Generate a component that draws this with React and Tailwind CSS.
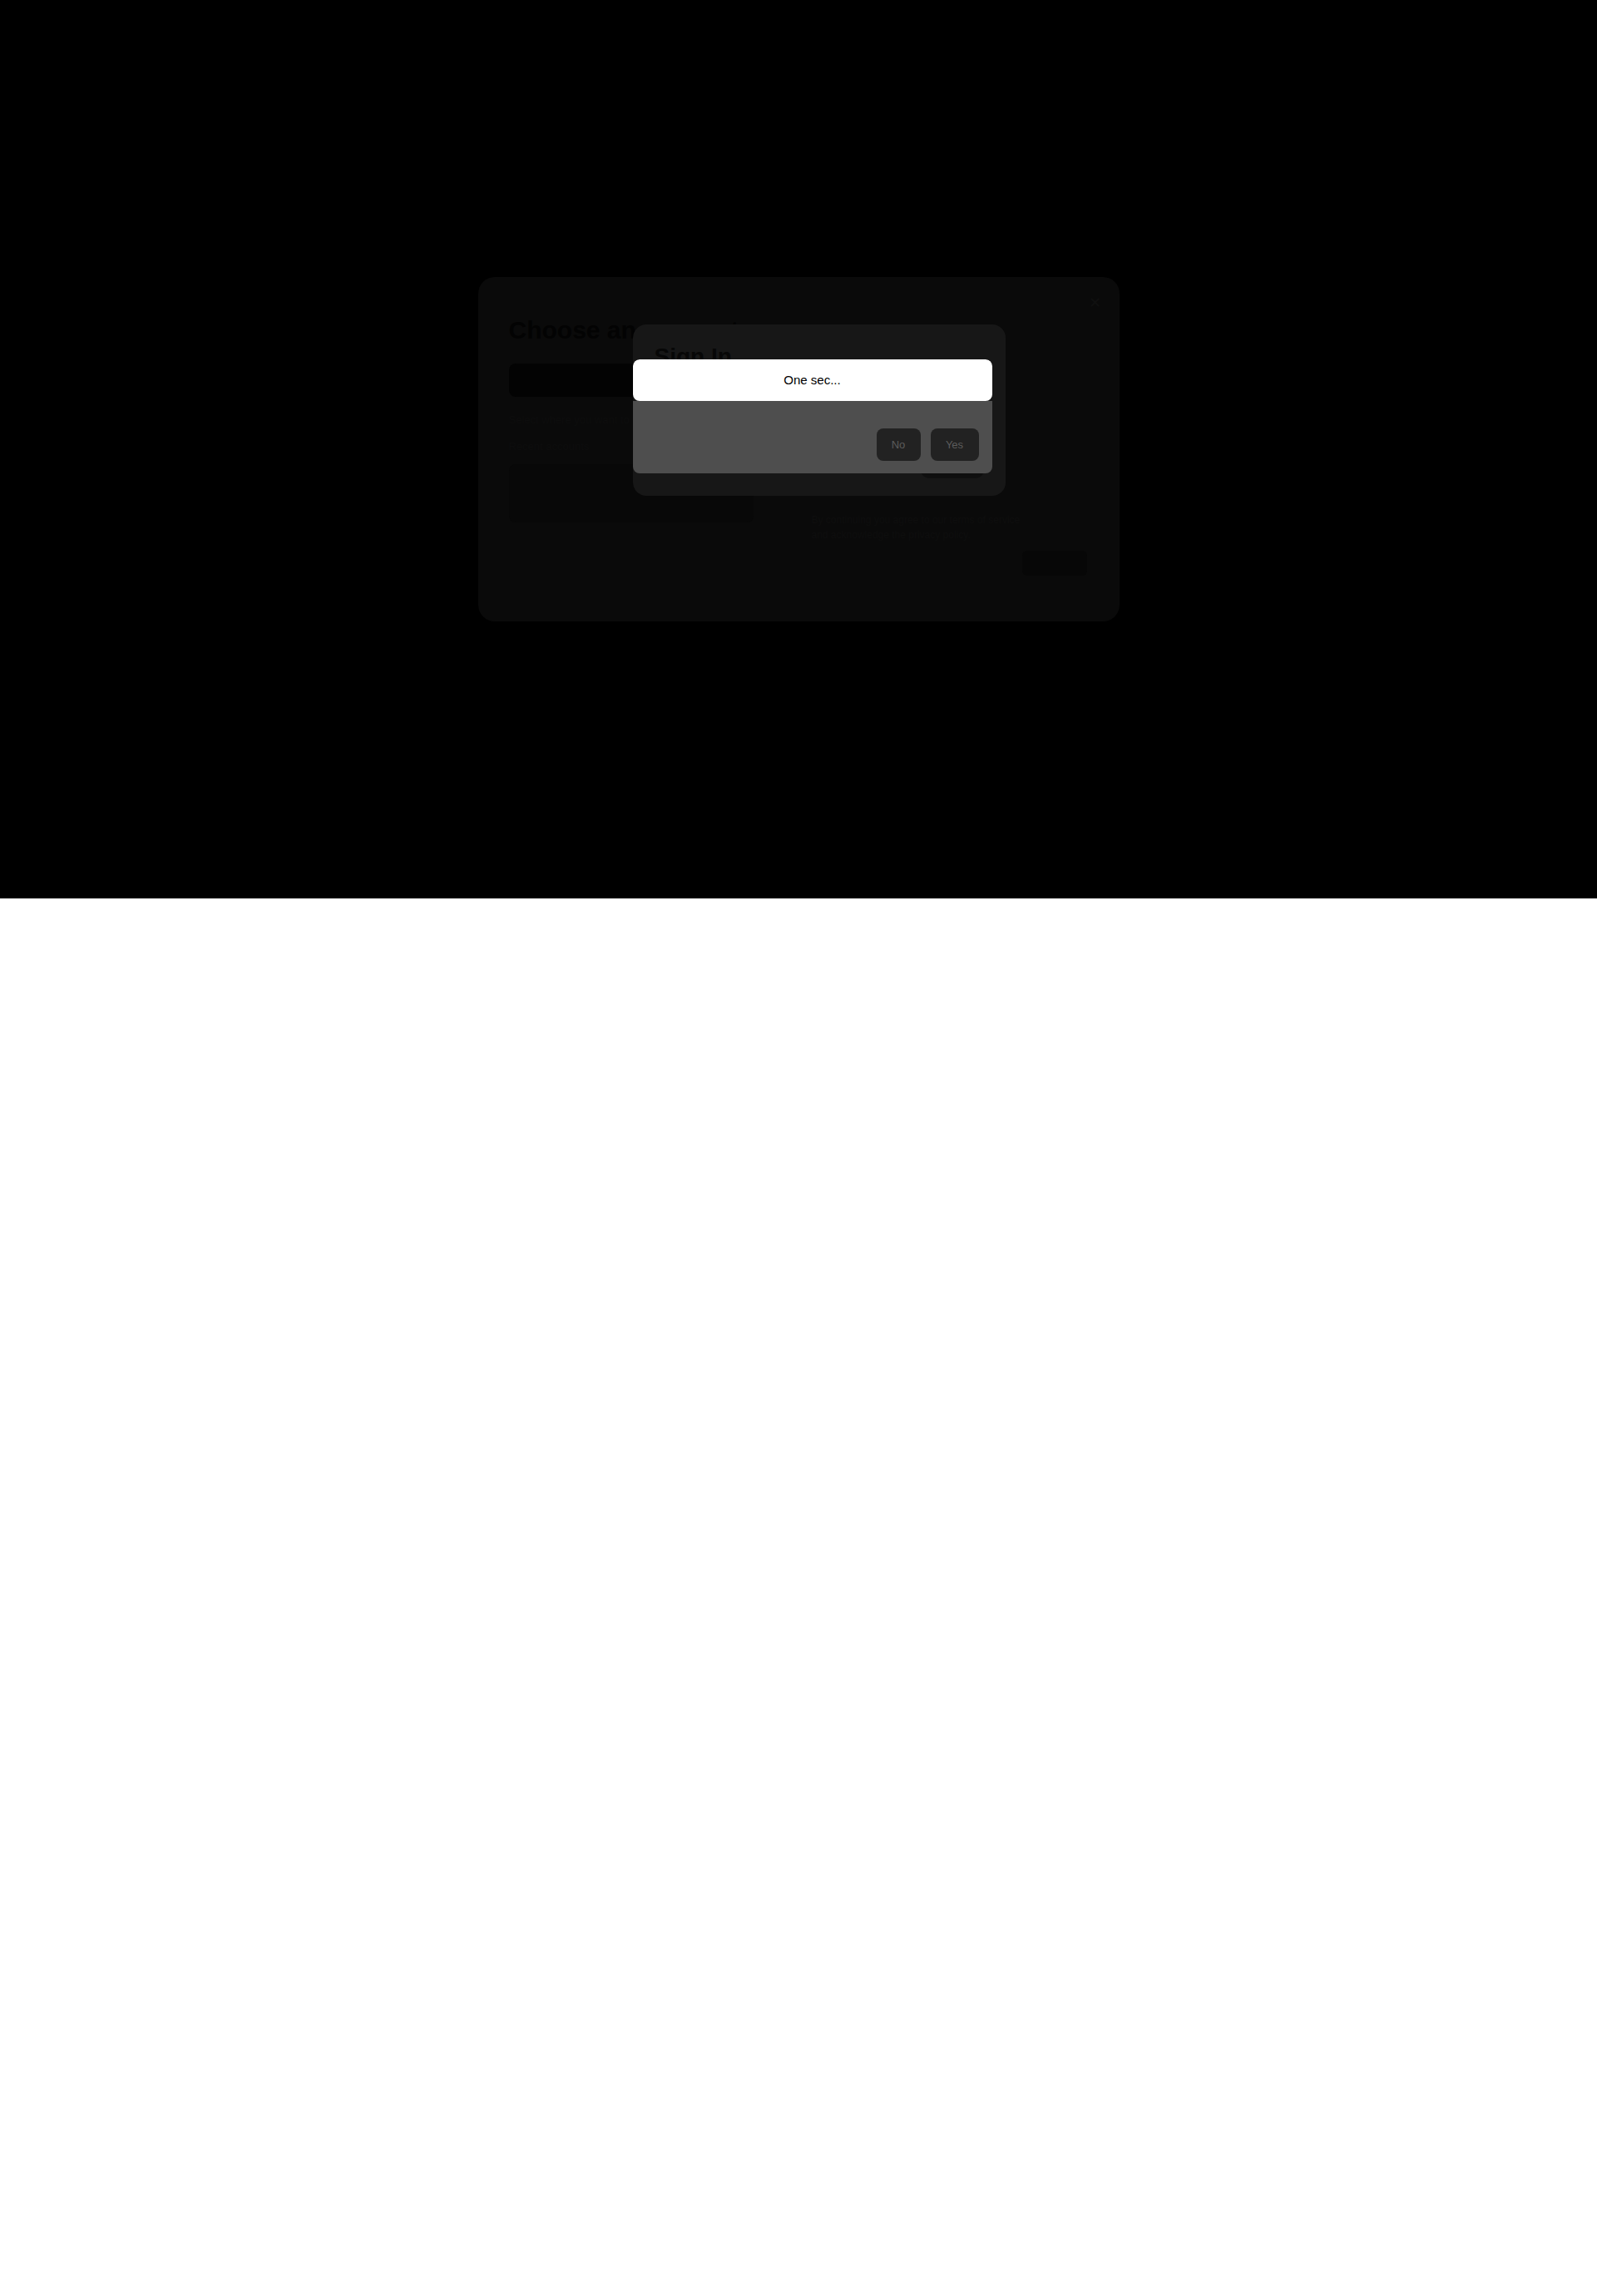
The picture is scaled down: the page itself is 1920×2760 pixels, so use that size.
export default function App() {
  return (
    <div className="w-full" style={{ fontFamily: '"Liberation Sans", Arial, sans-serif' }}>
      <div className="h-[1080px] w-full bg-black flex items-center justify-center">
        <div className="relative w-[771px] h-[414px] rounded-[20px] bg-[#0a0a0a] px-[37px] pt-[46px]">
          <div className="absolute right-[22px] top-[22px] text-[#101010] text-[18px] leading-none">✕</div>
          <h2 className="text-[30px] font-bold leading-[36px] text-[#030303]">Choose an account</h2>
          <div className="mt-[22px] h-[40px] w-[300px] rounded-[8px] bg-[#030303]"></div>
          <div className="mt-[18px] text-[13px] text-[#0d0d0d]">Select where you want to continue</div>
          <div className="mt-[12px] text-[13px] text-[#0d0d0d]">Recent accounts</div>
          <div className="mt-[12px] flex gap-[70px]">
            <div className="h-[70px] w-[294px] rounded-[8px] bg-[#080808]"></div>
            <div className="flex flex-col pt-[58px] text-[12px] text-[#0e0e0e] leading-[18px]">
              <span>By continuing you agree to our terms of service</span>
              <span>and acknowledge the privacy policy.</span>
            </div>
          </div>
          <div className="mt-[10px] flex justify-end pr-[2px]">
            <div className="h-[30px] w-[78px] rounded-[6px] bg-[#070707]"></div>
          </div>

          <div className="absolute left-[186px] top-[57px] w-[448px] h-[206px] rounded-[16px] bg-[#171717] flex flex-col px-[26px] pt-[22px] pb-[21px]">
            <h3 className="text-[28px] font-bold leading-[34px] text-[#070707]">Sign In</h3>
            <div className="flex-1"></div>
            <div className="flex justify-end">
              <div className="h-[40px] w-[76px] rounded-[10px] bg-[#0f0f0f]"></div>
            </div>

            <div className="absolute left-0 top-[42px] w-[432px] h-[137px] flex flex-col rounded-[8px] overflow-hidden">
              <div className="h-[50px] bg-white flex items-center justify-center rounded-[8px] text-[15px] text-black">
                One sec...
              </div>
              <div className="flex-1 bg-[#4e4e4e] flex items-end justify-end gap-[12px] px-[16px] pb-[15px]">
                <button className="h-[39px] w-[53px] rounded-[8px] bg-[#222222] text-[13px] text-[#5c5c5c]">No</button>
                <button className="h-[39px] w-[58px] rounded-[8px] bg-[#222222] text-[13px] text-[#5c5c5c]">Yes</button>
              </div>
            </div>
          </div>
        </div>
      </div>
      <div className="h-[1680px] w-full bg-white"></div>
    </div>
  );
}
